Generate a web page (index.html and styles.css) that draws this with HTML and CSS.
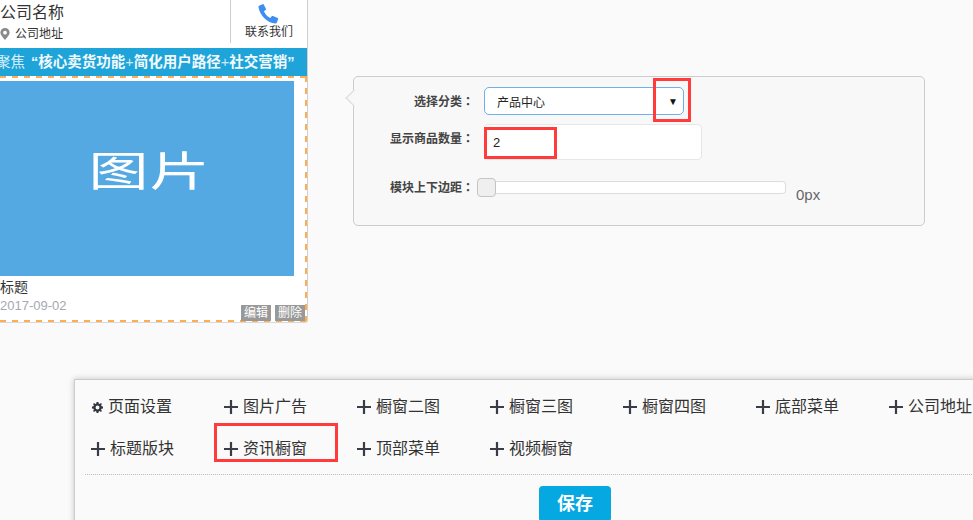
FILE: index.html
```html
<!DOCTYPE html>
<html lang="zh-CN">
<head>
<meta charset="utf-8">
<title>页面设置</title>
<link rel="stylesheet" href="styles.css">
</head>
<body>
<div class="page">
  <div class="top">
    <section class="phone">
      <header class="head">
        <div class="company">
          <div class="name">公司名称</div>
          <div class="addr">
            <svg class="pin" viewBox="0 0 10 12" width="10" height="12"><path fill="#8a8a8a" fill-rule="evenodd" d="M5 0a4.6 4.6 0 0 1 4.6 4.6C9.600 7.500 5 12 5 12S.4 7.500.4 4.600A4.600 4.600 0 0 1 5 0zm0 2.800a1.900 1.900 0 1 0 0 3.800 1.900 1.900 0 0 0 0-3.800z"/></svg>
            <span>公司地址</span>
          </div>
        </div>
        <div class="contact">
          <svg class="tel" viewBox="0 0 22 20" width="22" height="20"><path fill="#3d8ef0" d="M1 1.800 4.600.2c.6-.2 1 0 1.300.5l2 4c.2.500.1.900-.3 1.200L5.900 7.300c1.300 3 3.400 5.200 6.300 6.700l1.500-1.700c.4-.4.800-.5 1.300-.3l4.600 2c.6.300.7.700.5 1.300l-1.200 3.200c-.3.700-.8 1-1.500 1C9.500 19.200 1.500 11 .5 3c-.1-.5.100-1 .5-1.200z"/></svg>
          <span>联系我们</span>
        </div>
      </header>
      <div class="banner">聚焦<b>“核心卖货功能<i>+</i>简化用户路径<i>+</i>社交营销”</b></div>
      <div class="module">
        <div class="pic"><span>图片</span></div>
        <div class="title">标题</div>
        <div class="date">2017-09-02</div>
        <div class="actions"><span>编辑</span><span>删除</span></div>
      </div>
    </section>
    <section class="settings">
      <div class="row row-select">
        <label class="lab">选择分类<i class="colon" lang="zh-TW">：</i></label>
        <div class="select"><span>产品中心</span><em>▼</em></div>
      </div>
      <div class="row row-input">
        <label class="lab lab-up">显示商品数量<i class="colon" lang="zh-TW">：</i></label>
        <div class="input">2</div>
      </div>
      <div class="row row-slider">
        <label class="lab">模块上下边距<i class="colon" lang="zh-TW">：</i></label>
        <div class="slider"><div class="thumb"></div><div class="track"></div></div>
        <span class="px">0px</span>
      </div>
      <div class="mark mark-arrow"></div>
      <div class="mark mark-input"></div>
    </section>
  </div>
  <section class="tools">
    <div class="grid">
      <div class="item first"><svg class="gear" viewBox="0 0 12 12" width="11" height="11"><path fill="#33363f" fill-rule="evenodd" d="M5 0h2l.3 1.600 1.100.5L9.800 1.200l1 1-.9 1.400.5 1.100L12 5v2l-1.600.3-.5 1.100.9 1.400-1 1-1.400-.9-1.100.5L7 12H5l-.3-1.600-1.100-.5-1.400.9-1-1 .9-1.400-.5-1.100L0 7V5l1.600-.3.5-1.100-.9-1.400 1-1 1.400.9 1.100-.5zM6 3.900a2.100 2.100 0 1 0 0 4.200 2.100 2.100 0 0 0 0-4.200z"/></svg><span>页面设置</span></div>
      <div class="item"><svg class="plus" viewBox="0 0 14 14" width="14" height="14"><path fill="#3a3c48" d="M5.900 0h2.200v5.900H14v2.200H8.100V14H5.900V8.100H0V5.900h5.900z"/></svg><span>图片广告</span></div>
      <div class="item"><svg class="plus" viewBox="0 0 14 14" width="14" height="14"><path fill="#3a3c48" d="M5.900 0h2.200v5.900H14v2.200H8.100V14H5.900V8.100H0V5.900h5.900z"/></svg><span>橱窗二图</span></div>
      <div class="item"><svg class="plus" viewBox="0 0 14 14" width="14" height="14"><path fill="#3a3c48" d="M5.900 0h2.200v5.900H14v2.200H8.100V14H5.900V8.100H0V5.900h5.900z"/></svg><span>橱窗三图</span></div>
      <div class="item"><svg class="plus" viewBox="0 0 14 14" width="14" height="14"><path fill="#3a3c48" d="M5.900 0h2.200v5.900H14v2.200H8.100V14H5.900V8.100H0V5.900h5.900z"/></svg><span>橱窗四图</span></div>
      <div class="item"><svg class="plus" viewBox="0 0 14 14" width="14" height="14"><path fill="#3a3c48" d="M5.900 0h2.200v5.900H14v2.200H8.100V14H5.900V8.100H0V5.900h5.900z"/></svg><span>底部菜单</span></div>
      <div class="item"><svg class="plus" viewBox="0 0 14 14" width="14" height="14"><path fill="#3a3c48" d="M5.900 0h2.200v5.900H14v2.200H8.100V14H5.900V8.100H0V5.900h5.900z"/></svg><span>公司地址</span></div>
      <div class="item"><svg class="plus" viewBox="0 0 14 14" width="14" height="14"><path fill="#3a3c48" d="M5.900 0h2.200v5.900H14v2.200H8.100V14H5.900V8.100H0V5.900h5.900z"/></svg><span>标题版块</span></div>
      <div class="item"><svg class="plus" viewBox="0 0 14 14" width="14" height="14"><path fill="#3a3c48" d="M5.900 0h2.200v5.900H14v2.200H8.100V14H5.900V8.100H0V5.900h5.900z"/></svg><span>资讯橱窗</span></div>
      <div class="item"><svg class="plus" viewBox="0 0 14 14" width="14" height="14"><path fill="#3a3c48" d="M5.900 0h2.200v5.900H14v2.200H8.100V14H5.900V8.100H0V5.900h5.900z"/></svg><span>顶部菜单</span></div>
      <div class="item"><svg class="plus" viewBox="0 0 14 14" width="14" height="14"><path fill="#3a3c48" d="M5.900 0h2.200v5.900H14v2.200H8.100V14H5.900V8.100H0V5.900h5.900z"/></svg><span>视频橱窗</span></div>
    </div>
    <div class="divider"></div>
    <div class="save-wrap"><button class="save">保存</button></div>
    <div class="mark mark-news"></div>
  </section>
</div>
</body>
</html>
```
FILE: styles.css
```css
* { box-sizing: border-box; }
html, body { margin: 0; padding: 0; }
body {
  width: 973px;
  height: 520px;
  overflow: hidden;
  background: #fafafa;
  font-family: "Liberation Sans", "Noto Sans CJK SC", sans-serif;
  color: #333;
}
.page { width: 973px; height: 520px; overflow: hidden; }
.top { display: flex; align-items: flex-start; height: 379px; }

/* phone preview */
.phone {
  width: 308px;
  height: 323px;
  flex: none;
  background: #fff;
  border-right: 1px solid #d0d0d0;
  border-bottom: 1px solid #d8d8d8;
  border-bottom-right-radius: 3px;
  overflow: hidden;
}
.head { display: flex; height: 48px; }
.company { flex: 1; min-width: 0; }
.name { font-size: 16px; line-height: 24px; padding-top: 1px; height: 24px; color: #333; }
.addr { display: flex; align-items: center; font-size: 12px; line-height: 18px; margin-top: 1px; }
.pin { margin-right: 5px; }
.contact {
  width: 77px;
  height: 43px;
  border-left: 1px solid #ccc;
  display: flex;
  flex-direction: column;
  align-items: center;
  padding: 4px 0 0 0;
  font-size: 12px;
  line-height: 16px;
}
.tel { display: block; }
.banner {
  height: 28px;
  background: #1fa4da;
  color: #d8eef8;
  font-size: 14.5px;
  line-height: 28px;
  white-space: nowrap;
  margin-left: -4px;
}
.banner b { color: #f2fafd; font-weight: 700; margin-left: 6px; }
.banner i { font-style: normal; font-weight: 400; color: #cfe9f5; }
.module {
  position: relative;
  height: 246px;
  padding: 5px 13px 0 0;
  background:
    repeating-linear-gradient(90deg, #ffad55 0 6px, transparent 6px 12px) left top / 100% 2px no-repeat,
    repeating-linear-gradient(90deg, #ffad55 0 6px, transparent 6px 12px) left bottom / 100% 2px no-repeat,
    repeating-linear-gradient(180deg, #ffad55 0 6px, transparent 6px 12px) right top / 2px 100% no-repeat;
}
.pic {
  height: 195px;
  background: #55a9e3;
  color: #fff;
  display: flex;
  align-items: center;
  justify-content: center;
}
.pic span {
  font-size: 60px;
  line-height: 60px;
  font-weight: 400;
  letter-spacing: 1px;
  transform: scaleY(.68);
  margin-top: -13px;
  margin-left: 5px;
}
.title { font-size: 14px; line-height: 16px; margin-top: 3px; }
.date { font-size: 13px; line-height: 16px; margin-top: 3px; color: #a4a9b0; }
.actions {
  position: absolute;
  right: 2px;
  bottom: 1px;
  display: flex;
  gap: 4px;
}
.actions span {
  width: 30px;
  height: 16px;
  background: #999;
  color: #fff;
  font-size: 12px;
  line-height: 16px;
  text-align: center;
}

/* settings panel */
.settings {
  position: relative;
  width: 572px;
  height: 150px;
  margin: 76px 0 0 45px;
  background: #f8f8f8;
  border: 1px solid #ccc;
  border-radius: 5px;
}
.settings::before {
  content: "";
  position: absolute;
  left: -6px;
  top: 15px;
  width: 11px;
  height: 11px;
  background: #f8f8f8;
  border-left: 1px solid #d8d8d8;
  border-bottom: 1px solid #d8d8d8;
  transform: rotate(45deg);
}
.row { display: flex; align-items: center; }
.lab {
  width: 120px;
  flex: none;
  text-align: right;
  font-size: 12px;
  font-weight: 700;
  color: #444;
  white-space: nowrap;
}
.colon { font-family: "Noto Sans CJK TC", sans-serif; font-style: normal; }
.row-select { margin-top: 10px; height: 28px; }
.row-select .lab { padding-bottom: 1px; }
.select {
  display: flex;
  justify-content: space-between;
  align-items: center;
  width: 200px;
  height: 28px;
  margin-left: 10px;
  padding: 0 5px 0 12px;
  background: #fff;
  border: 1px solid #6db0ea;
  border-radius: 5px;
  font-size: 12px;
  color: #222;
}
.select em { font-style: normal; font-size: 10px; color: #111; }
.row-input { margin-top: 9px; height: 36px; align-items: flex-start; }
.lab-up { line-height: 28px; }
.input {
  width: 218px;
  height: 36px;
  margin-left: 10px;
  padding-left: 8px;
  background: #fff;
  border: 1px solid #e6e6e6;
  border-radius: 4px;
  font-size: 13px;
  line-height: 36px;
  color: #222;
}
.row-slider { margin-top: 17px; height: 20px; position: relative; }
.row-slider .lab { padding-bottom: 1px; }
.slider { display: flex; align-items: center; margin-left: 3px; width: 309px; }
.thumb {
  width: 19px;
  height: 19px;
  flex: none;
  background: #efefef;
  border: 1px solid #c5c5c5;
  border-radius: 4px;
}
.track {
  flex: 1;
  height: 13px;
  background: #fff;
  border: 1px solid #ddd;
  border-left: none;
  border-radius: 0 4px 4px 0;
}
.px { font-size: 15px; margin: 15px 0 0 10px; color: #666; }

/* annotations */
.mark { position: absolute; border: 3px solid #ff3b3b; pointer-events: none; }
.mark-arrow { left: 299px; top: 1px; width: 38px; height: 44px; }
.mark-input { left: 130px; top: 50px; width: 73px; height: 32px; }
.mark-news { left: 139px; top: 43px; width: 124px; height: 39px; }

/* bottom toolbar */
.tools {
  position: relative;
  width: 960px;
  height: 200px;
  margin-left: 74px;
  background: #fafafa;
  border-top: 1px solid #ccc;
  border-left: 1px solid #ccc;
  box-shadow: 0 0 6px rgba(0, 0, 0, .22);
}
.grid {
  display: flex;
  flex-wrap: wrap;
  width: 960px;
  padding: 6px 0 0 16px;
}
.item {
  display: flex;
  align-items: center;
  width: 133px;
  height: 42px;
  font-size: 16px;
  line-height: 42px;
  color: #333;
  white-space: nowrap;
}
.plus { margin-right: 5px; flex: none; }
.gear { margin: 1px 5px 0 1px; flex: none; }
.divider { margin: 4px 0 0 10px; border-top: 1px dotted #bbb; }
.save-wrap { display: flex; margin: 11px 0 0 464px; }
.save {
  width: 72px;
  height: 36px;
  padding: 0;
  border: none;
  border-radius: 4px;
  background: #06a8e2;
  color: #fff;
  font-family: "Liberation Sans", "Noto Sans CJK SC", sans-serif;
  font-size: 18px;
  line-height: 34px;
  font-weight: 700;
}
```
